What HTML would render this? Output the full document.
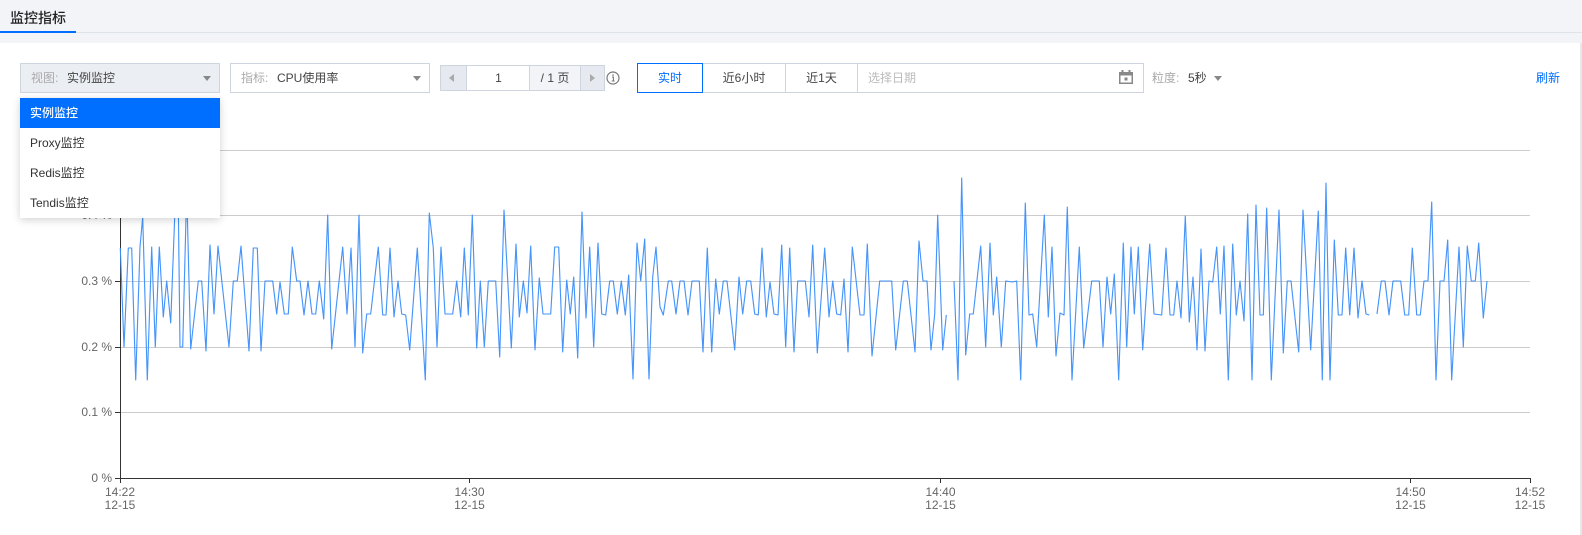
<!DOCTYPE html>
<html lang="zh">
<head>
<meta charset="utf-8">
<title>监控指标</title>
<style>
html,body{margin:0;padding:0;background:#fff;}
body{width:1582px;height:535px;overflow:hidden;position:relative;font-family:"Liberation Sans","Noto Sans CJK SC",sans-serif;font-size:12px;color:#444;}
.a{position:absolute;box-sizing:border-box;white-space:nowrap;}
.box{border:1px solid #cfd5de;}
.c{text-align:center;}
.tri{position:absolute;width:0;height:0;border-left:4px solid transparent;border-right:4px solid transparent;border-top:5px solid #888;}
.row{position:absolute;left:0;width:200px;height:30px;line-height:30px;padding-left:10px;box-sizing:border-box;color:#333;}
</style>
</head>
<body>
<div class="a" style="left:0;top:0;width:1582px;height:43px;background:#f2f4f8;"></div>
<div class="a" style="left:0;top:32px;width:1582px;height:1px;background:#dfe3ea;"></div>
<div class="a" style="left:0;top:31px;width:76px;height:2px;background:#006eff;"></div>
<div class="a" style="left:10px;top:8px;font-size:14px;line-height:20px;font-weight:500;color:#222;">监控指标</div>
<div class="a" style="left:1580px;top:43px;width:2px;height:492px;background:#e6e8ee;"></div>

<svg class="a" style="left:0;top:0;" width="1582" height="535" viewBox="0 0 1582 535">
<g stroke="#ccc" stroke-width="1" fill="none">
<path d="M120 150.5H1530M120 215.5H1530M120 281.5H1530M120 347.5H1530M120 412.5H1530"/>
</g>
<g stroke="#333" stroke-width="1" fill="none">
<path d="M120.5 150V479M115 150.5H120M115 215.5H120M115 281.5H120M115 347.5H120M115 412.5H120M115 478.5H1530.5M120.5 478V483M469.5 478V483M940.5 478V483M1410.5 478V483M1530.5 478V483"/>
</g>
<g font-family="'Liberation Sans',sans-serif" font-size="12" fill="#666" text-anchor="end">
<text x="112" y="219">0.4 %</text>
<text x="112" y="285">0.3 %</text>
<text x="112" y="351">0.2 %</text>
<text x="112" y="416">0.1 %</text>
<text x="112" y="482">0 %</text>
</g>
<g font-family="'Liberation Sans',sans-serif" font-size="12" fill="#666" text-anchor="middle">
<text x="120" y="496">14:22</text><text x="120" y="509">12-15</text>
<text x="469.5" y="496">14:30</text><text x="469.5" y="509">12-15</text>
<text x="940.5" y="496">14:40</text><text x="940.5" y="509">12-15</text>
<text x="1410.5" y="496">14:50</text><text x="1410.5" y="509">12-15</text>
<text x="1530" y="496">14:52</text><text x="1530" y="509">12-15</text>
</g>
<g id="ln" fill="none" stroke="#3d8ffb" stroke-width="1.1" stroke-linejoin="round" stroke-opacity=".95">
<polyline points="120.3,248 124,347 128.3,248 131.7,248 135.7,380 140,247 142.7,217 147.3,380 151.7,247 155.3,347 159.3,247 163.3,317 166.7,281 170.7,323 174.7,217 178,180 180,347 182.7,347 186.7,190 190.7,349 198.3,281 201.7,281 206,351 210,245 214,314 218,246 229,347 233.3,281 237.3,281 241,246 249,351 253.3,248 257.3,248 261,351 265,281 272.7,281 276.7,314 280,282 284.3,314 288.3,314 292.3,247 296.7,281 300,281 304,315 308,281 312,314 315.7,314 319.3,281 323.7,319 327.7,215 331.7,349 342.7,247 347,314 351,248 355,347 359,215 362.7,353 366.7,314 370.7,314 378.3,247 382.7,315 386,315 390,248 394,317 398,281 401.7,314 405.7,315 409.7,350 417.3,248 425.3,380 429.3,213 433.3,248 437,347 441,247 445,314 452.7,314 456.7,281 460.7,317 464.3,248 468.3,315 472.3,215 476.7,348 480.3,281 484.3,347 488.3,281 495.7,281 499.7,357 504,210 511.3,348 516,244 519.3,317 523.3,281 527,313 530.7,246 535,350 539.3,278 543,314 550.7,314 554.7,247 558.7,247 562.7,352 566.7,280 570.3,314 573.7,277 577.7,358 582,212 586,318 589.7,247 593.7,347 598,243 601.7,314 605.7,315 609.7,281 613.3,281 617.3,314 621.3,281 625.3,315 628.7,275 633,379 637,243 640.7,281 644.7,239 649,379 652.7,277 656,247 660,307 663.3,315 668.3,281 671.7,281 676,314 680,281 684,281 688,315 692,281 699.3,281 703,352 707.3,248 711.7,352 715.7,279 719.3,314 723.3,281 727,281 734.7,350 739,277 742.7,314 746.7,281 750.7,281 754.7,314 758.3,315 762,248 766.3,317 770,282 774,314 778,315 781.7,245 785.7,347 789.7,248 794,352 797.7,281 805.3,281 809,317 812.7,245 817.3,353 824.7,248 829,317 832.7,281 836.7,314 840.7,315 844,279 848,352 852.3,247 860,315 864,315 867.3,244 872,356 879.7,281 891.7,281 895.7,350 903.3,281 907.3,281 915,352 919,241 923,281 927,281 931,350 934.7,314 937.7,215 942.7,350 946.3,315"/>
<polyline points="954,281 958,380 961.7,178 965.7,355 969.7,314 973.3,314 980.7,246 985.7,347 990,243 993.3,315 996.7,277 1001.3,347 1005.7,281 1012.3,282 1016.7,281 1020.7,380 1025.3,203 1029,315 1032.7,314 1036.7,347 1044.3,215 1048.3,317 1052,247 1056,356 1060,313 1064,315 1067.3,207 1072,380 1079.3,247 1083.7,348 1091.7,281 1099.3,281 1103,347 1107,277 1110.7,314 1114.3,274 1118.7,380 1123.3,243 1126.7,347 1131,247 1134.3,314 1138.3,247 1142.7,350 1149.7,244 1154,314 1161.7,315 1166,248 1170,315 1173.7,315 1177,281 1181,318 1185.3,216 1189.3,322 1193,277 1197,350 1201,249 1205,351 1209,281 1212.7,282 1216.7,247 1220.3,314 1224,246 1228.3,380 1232.7,244 1236.3,315 1240,281 1244,321 1247.7,214 1252,380 1256,205 1260,315 1263.3,315 1266.7,208 1271.3,380 1279,210 1283.3,353 1287.3,281 1291,281 1298.7,352 1303,210 1310.7,350 1318.3,211 1322.3,380 1326,183 1330,380 1334.3,240 1338.3,315 1342,315 1345.7,248 1349.7,315 1354,248 1358,318 1362,281 1366,314 1369.3,315"/>
<polyline points="1377,314 1381.3,281 1385,281 1389,315 1393,281 1400.7,281 1404.7,315 1408.7,315 1412.3,248 1416.7,315 1420.3,315 1424,281 1428,281 1431.7,202 1436,380 1440,281 1444,281 1447.7,240 1451.7,380 1459,247 1463.3,347 1467.3,246 1471.3,281 1475.3,281 1478.7,243 1483.3,318 1487,281"/>
</g>
<use href="#ln" style="stroke-width:2.2;opacity:.22"/>
</svg>

<!-- select 1 -->
<div class="a box" style="left:20px;top:63px;width:200px;height:30px;background:#ebeef2;line-height:28px;padding-left:10px;"><span style="color:#aaa;">视图:</span><span style="position:absolute;left:46px;">实例监控</span></div>
<div class="tri" style="left:203px;top:76px;"></div>
<!-- select 2 -->
<div class="a box" style="left:230px;top:63px;width:200px;height:30px;background:#fff;line-height:28px;padding-left:10px;"><span style="color:#aaa;">指标:</span><span style="position:absolute;left:46px;">CPU使用率</span></div>
<div class="tri" style="left:413px;top:76px;"></div>

<!-- dropdown -->
<div class="a" style="left:20px;top:98px;width:200px;height:120px;background:#fff;box-shadow:0 2px 8px rgba(0,0,0,.18);">
<div class="row" style="top:0;background:#006eff;color:#fff;font-weight:500;">实例监控</div>
<div class="row" style="top:30px;">Proxy监控</div>
<div class="row" style="top:60px;">Redis监控</div>
<div class="row" style="top:90px;">Tendis监控</div>
</div>

<!-- pagination -->
<div class="a box" style="left:440px;top:65px;width:165px;height:26px;background:#fff;"></div>
<div class="a box" style="left:440px;top:65px;width:27px;height:26px;background:#e6e9ef;"></div>
<div class="tri" style="left:449px;top:74px;border:0;border-top:4px solid transparent;border-bottom:4px solid transparent;border-right:5px solid #aaa;"></div>
<div class="a c" style="left:467px;top:65px;width:63px;height:26px;line-height:26px;">1</div>
<div class="a box c" style="left:529px;top:65px;width:52px;height:26px;line-height:24px;background:#f2f4f8;">/ 1 页</div>
<div class="a box" style="left:580px;top:65px;width:25px;height:26px;background:#e6e9ef;"></div>
<div class="tri" style="left:590px;top:74px;border:0;border-top:4px solid transparent;border-bottom:4px solid transparent;border-left:5px solid #aaa;"></div>
<svg class="a" style="left:606px;top:71px;" width="14" height="14" viewBox="0 0 14 14"><circle cx="7" cy="7" r="6" fill="none" stroke="#777" stroke-width="1.2"/><path d="M6 6h1.4v3.6M5.6 10h3" fill="none" stroke="#777" stroke-width="1.1"/><rect x="6.3" y="3.4" width="1.4" height="1.4" fill="#777"/></svg>

<!-- time tabs -->
<div class="a box c" style="left:702px;top:63px;width:84px;height:30px;line-height:28px;">近6小时</div>
<div class="a box c" style="left:785px;top:63px;width:73px;height:30px;line-height:28px;">近1天</div>
<div class="a box" style="left:857px;top:63px;width:287px;height:30px;line-height:28px;padding-left:10px;color:#bbb;">选择日期</div>
<div class="a c" style="left:637px;top:63px;width:66px;height:30px;line-height:28px;border:1px solid #006eff;color:#006eff;background:#fff;">实时</div>
<svg class="a" style="left:1119px;top:70px;" width="14" height="14" viewBox="0 0 14 14"><path fill="#888" d="M0 2h2.5V0h2v2h5V0h2v2H14v12H0zM1.5 5.5v7h11v-7z"/><rect x="5.5" y="7.5" width="3" height="3" fill="#888"/></svg>
<div class="a" style="left:1152px;top:69px;line-height:18px;color:#aaa;">粒度:</div>
<div class="a" style="left:1188px;top:69px;line-height:18px;">5秒</div>
<div class="tri" style="left:1214px;top:76px;"></div>
<div class="a" style="left:1536px;top:69px;line-height:18px;color:#006eff;">刷新</div>
</body>
</html>
